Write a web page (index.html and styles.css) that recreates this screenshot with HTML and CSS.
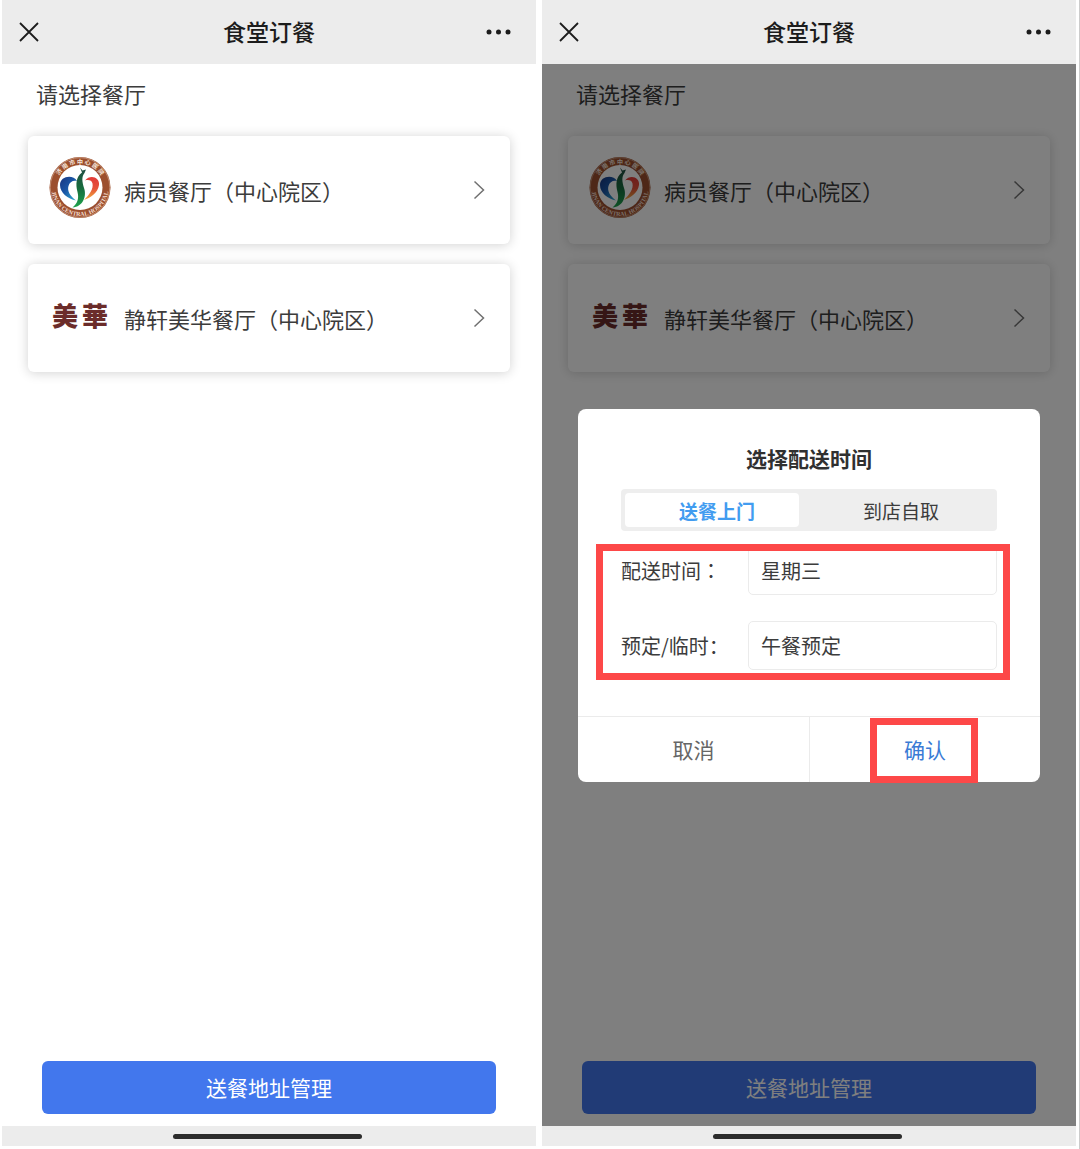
FILE: index.html
```html
<!DOCTYPE html>
<html lang="zh-CN">
<head>
<meta charset="utf-8">
<meta name="viewport" content="width=device-width, initial-scale=1">
<title>食堂订餐</title>
<link rel="stylesheet" href="styles.css">
</head>
<body>
<!-- Shared artwork for both screens -->
<svg class="sprite" aria-hidden="true">
  <defs>
    <linearGradient id="blue" x1="0" y1="0" x2="1" y2="1"><stop offset="0" stop-color="#17347f"/><stop offset=".45" stop-color="#1a55a5"/><stop offset="1" stop-color="#35b5d6"/></linearGradient>
    <linearGradient id="red" x1="0" y1="0" x2="0" y2="1"><stop offset="0" stop-color="#e23a38"/><stop offset=".5" stop-color="#e5533a"/><stop offset="1" stop-color="#f2ae3c"/></linearGradient>
    <linearGradient id="green" x1="0" y1="0" x2="0" y2="1"><stop offset="0" stop-color="#234c43"/><stop offset=".5" stop-color="#176b3d"/><stop offset="1" stop-color="#1fa34d"/></linearGradient>
    <path id="arc-top" d="M8 32.5A24 24 0 0 1 56 32.5"/>
    <path id="arc-bottom" d="M3.500 32.500A28.500 28.500 0 0 0 60.500 32.500"/>
  </defs>
  <symbol id="close" viewBox="0 0 20 20"><path d="M1 1 19 19M19 1 1 19" fill="none" stroke="currentColor" stroke-width="1.8"/></symbol>
  <symbol id="more" viewBox="0 0 26 6"><circle cx="3" cy="3" r="2.5"/><circle cx="12.5" cy="3" r="2.5"/><circle cx="22" cy="3" r="2.5"/></symbol>
  <symbol id="chevron" viewBox="0 0 12 20"><path d="M1.5 1.5 10.5 10 1.5 18.5" fill="none" stroke="currentColor" stroke-width="1.5"/></symbol>
  <symbol id="seal" viewBox="0 0 64 70">
    <circle cx="32" cy="32.500" r="30.500" fill="#9c4f2e"/>
    <circle cx="32" cy="32.500" r="29.800" fill="none" stroke="#c99a82" stroke-width=".8"/>
    <circle cx="32" cy="32.500" r="22.500" fill="#fff"/>
    <path d="M29 26C25 19 12 21 12 30C12 38 20 44 28 45.500C22 41 19 36 20.500 31C21.500 27 25 25 29 26Z" fill="url(#blue)"/>
    <path d="M37 25.500C42 19 52 22 51 30C50 38 42 43 36 45C42 39 45.500 34 44.500 28.500C43.500 25 40.500 24.500 37 25.500Z" fill="url(#red)"/>
    <path d="M32 12.500 34.500 15.500 38 14.500 36.500 18C33.500 22 34 26 36 33C39 41 35 52 24.500 52.500C30 48 31 43 29.500 37C27.500 29 28 22 34 17.500Z" fill="url(#green)"/>
  </symbol>
</svg>

<div class="screens">
  <section class="screen">
    <header class="bar">
      <button class="icon-button" aria-label="关闭"><svg class="close"><use href="#close"/></svg></button>
      <h1 class="bar-title">食堂订餐</h1>
      <button class="icon-button" aria-label="更多"><svg class="more"><use href="#more"/></svg></button>
    </header>
    <main class="content">
      <h2 class="prompt">请选择餐厅</h2>
      <nav class="cards">
        <a class="card" href="#patient">
          <svg class="logo" viewBox="0 0 64 70" aria-hidden="true">
            <use href="#seal"/>
            <text class="seal-cn"><textPath href="#arc-top" startOffset="50%" text-anchor="middle">济 南 市 中 心 医 院</textPath></text>
            <text class="seal-en"><textPath href="#arc-bottom" startOffset="50%" text-anchor="middle">JINAN CENTRAL HOSPITAL</textPath></text>
          </svg>
          <span class="card-name">病员餐厅（中心院区）</span>
          <svg class="chevron" aria-hidden="true"><use href="#chevron"/></svg>
        </a>
        <a class="card" href="#meihua">
          <span class="logo wordmark"><span>美</span><span>華</span></span>
          <span class="card-name">静轩美华餐厅（中心院区）</span>
          <svg class="chevron" aria-hidden="true"><use href="#chevron"/></svg>
        </a>
      </nav>
      <button class="primary">送餐地址管理</button>
    </main>
    <footer class="home"><span class="home-line"></span></footer>
  </section>

  <section class="screen">
    <header class="bar">
      <button class="icon-button" aria-label="关闭"><svg class="close"><use href="#close"/></svg></button>
      <h1 class="bar-title">食堂订餐</h1>
      <button class="icon-button" aria-label="更多"><svg class="more"><use href="#more"/></svg></button>
    </header>
    <main class="content">
      <h2 class="prompt">请选择餐厅</h2>
      <nav class="cards">
        <a class="card" href="#patient">
          <svg class="logo" viewBox="0 0 64 70" aria-hidden="true">
            <use href="#seal"/>
            <text class="seal-cn"><textPath href="#arc-top" startOffset="50%" text-anchor="middle">济 南 市 中 心 医 院</textPath></text>
            <text class="seal-en"><textPath href="#arc-bottom" startOffset="50%" text-anchor="middle">JINAN CENTRAL HOSPITAL</textPath></text>
          </svg>
          <span class="card-name">病员餐厅（中心院区）</span>
          <svg class="chevron" aria-hidden="true"><use href="#chevron"/></svg>
        </a>
        <a class="card" href="#meihua">
          <span class="logo wordmark"><span>美</span><span>華</span></span>
          <span class="card-name">静轩美华餐厅（中心院区）</span>
          <svg class="chevron" aria-hidden="true"><use href="#chevron"/></svg>
        </a>
      </nav>
      <button class="primary">送餐地址管理</button>

      <div class="overlay">
        <form class="dialog" role="dialog" aria-labelledby="dialog-title">
          <div class="dialog-body">
            <h2 class="dialog-title" id="dialog-title">选择配送时间</h2>
            <div class="tabs">
              <button class="tab tab-active" type="button">送餐上门</button>
              <button class="tab" type="button">到店自取</button>
            </div>
            <div class="fields">
              <div class="field">
                <label for="day">配送时间<span class="colon" lang="zh-TW">：</span></label>
                <select class="value" id="day"><option>星期三</option></select>
              </div>
              <div class="field">
                <label for="meal">预定/临时：</label>
                <select class="value" id="meal"><option>午餐预定</option></select>
              </div>
              <span class="mark mark-fields"></span>
            </div>
          </div>
          <div class="actions">
            <button class="action" type="button">取消</button>
            <button class="action action-confirm" type="button">确认<span class="mark mark-confirm"></span></button>
          </div>
        </form>
      </div>
    </main>
    <footer class="home"><span class="home-line"></span></footer>
  </section>
</div>
</body>
</html>
```
FILE: styles.css
```css
* {
  box-sizing: border-box;
}

body {
  margin: 0;
  background: #fff;
  color: #3c3c3c;
  font-family: "Noto Sans CJK SC", sans-serif;
}

button,
select {
  margin: 0;
  padding: 0;
  border: 0;
  background: none;
  color: inherit;
  font: inherit;
}

h1,
h2 {
  margin: 0;
  font-weight: 400;
}

.sprite {
  position: absolute;
  width: 0;
  height: 0;
}

.screens {
  display: grid;
  grid-template-columns: 1fr 1fr;
  gap: 6px;
  min-height: 100vh;
  padding: 0 3px 3px 2px;
  border-right: 1px solid #ccc;
}

.screen {
  display: flex;
  flex-direction: column;
}

.bar {
  display: grid;
  grid-template-columns: 26px 1fr 26px;
  align-items: center;
  height: 64px;
  padding: 0 24px 0 17px;
  background: #ececec;
  color: #1c1c1c;
}

.icon-button {
  display: flex;
  align-items: center;
  height: 40px;
}

.close {
  width: 20px;
  height: 20px;
}

.more {
  width: 26px;
  height: 6px;
  fill: currentColor;
}

.bar-title {
  padding: 0 0 2px 7px;
  font-size: 23px;
  font-weight: 500;
  line-height: 32px;
  text-align: center;
}

.content {
  position: relative;
  display: flex;
  flex: 1;
  flex-direction: column;
}

.prompt {
  padding: 13px 34px 27px;
  font-size: 22px;
  line-height: 32px;
}

.cards {
  display: grid;
  gap: 20px;
  padding: 0 26px;
}

.card {
  display: flex;
  align-items: center;
  height: 108px;
  padding: 0 25px 0 20px;
  border-radius: 6px;
  background: #fff;
  box-shadow: 0 1px 12px rgba(0, 0, 0, .18);
  color: inherit;
  text-decoration: none;
}

.logo {
  flex: none;
  width: 64px;
  height: 70px;
  margin-right: 12px;
}

.wordmark {
  display: flex;
  justify-content: center;
  gap: 4px;
  color: #6b2c2a;
  font-family: "Noto Sans CJK TC", sans-serif;
  font-size: 26px;
  font-weight: 900;
  line-height: 64px;
}

.seal-cn {
  fill: #f6e6dc;
  font-family: "Noto Sans CJK SC", sans-serif;
  font-size: 6px;
  font-weight: 700;
}

.seal-en {
  fill: #f3ddd0;
  font-family: "Liberation Serif", serif;
  font-size: 6px;
  font-weight: 700;
}

.card-name {
  flex: 1;
  font-size: 22px;
  line-height: 32px;
}

.chevron {
  width: 12px;
  height: 20px;
  color: #707070;
}

.primary {
  height: 53px;
  margin: auto 40px 12px;
  padding-bottom: 2px;
  border-radius: 6px;
  background: #4277ed;
  color: #fff;
  font-size: 21px;
}

.home {
  display: flex;
  align-items: center;
  justify-content: center;
  height: 20px;
  padding-right: 4px;
  background: #ececec;
}

.home-line {
  width: 189px;
  height: 5px;
  border-radius: 3px;
  background: #2c2c2c;
}

.overlay {
  position: absolute;
  inset: 0;
  display: flex;
  align-items: center;
  justify-content: center;
  padding: 0 36px;
  background: rgba(0, 0, 0, .5);
}

.dialog {
  width: 100%;
  border-radius: 8px;
  background: #fff;
}

.dialog-body {
  padding: 33px 43px 46px;
}

.dialog-title {
  margin-bottom: 15px;
  color: #303030;
  font-size: 21px;
  font-weight: 700;
  line-height: 32px;
  text-align: center;
}

.tabs {
  display: grid;
  grid-template-columns: 1fr 1fr;
  height: 42px;
  margin-bottom: 15px;
  padding: 4px;
  border-radius: 4px;
  background: #eee;
  font-size: 19px;
}

.tab {
  padding-top: 2px;
}

.tab-active {
  margin-right: 10px;
  padding-left: 10px;
  border-radius: 4px;
  background: #fff;
  color: #429cf0;
  font-weight: 700;
}

.fields {
  position: relative;
  display: grid;
  gap: 26px;
  font-size: 20px;
}

.field {
  display: grid;
  grid-template-columns: 127px 1fr;
  align-items: center;
}

.colon {
  font-family: "Noto Sans CJK TC", sans-serif;
}

.value {
  width: 100%;
  height: 49px;
  padding: 0 12px;
  border: 1px solid #ebebeb;
  border-radius: 5px;
  appearance: none;
}

.mark {
  position: absolute;
  border: 7px solid #fd4848;
  pointer-events: none;
}

.mark-fields {
  inset: -2px -13px -10px -25px;
}

.actions {
  display: grid;
  grid-template-columns: 1fr 1fr;
  height: 66px;
  border-top: 1px solid #ebebeb;
  font-size: 21px;
}

.action {
  color: #666;
}

.action-confirm {
  position: relative;
  border-left: 1px solid #ebebeb;
  color: #3a7bd5;
}

.mark-confirm {
  inset: 1px 62px -1px 60px;
}
```
